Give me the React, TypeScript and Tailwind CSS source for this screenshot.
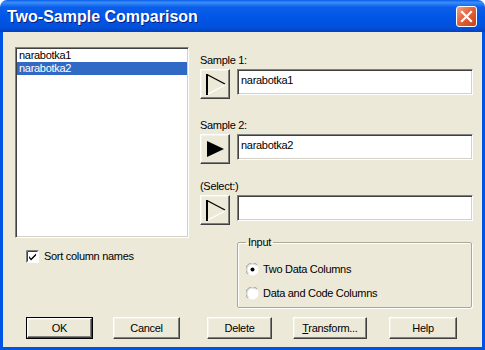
import React from 'react'

const FONT = { fontFamily: '"Liberation Sans", Arial, sans-serif' }

const sunken =
  'border border-t-[#808080] border-l-[#808080] border-b-white border-r-white shadow-[inset_1px_1px_0_#404040,inset_-1px_-1px_0_#D4D0C8]'
const raised =
  'border border-t-white border-l-white border-b-[#404040] border-r-[#404040] shadow-[inset_-1px_-1px_0_#808080,inset_1px_1px_0_#F4F2E8]'

function ArrowButton({ filled }: { filled?: boolean }) {
  return (
    <div className={`w-[30px] h-[30px] bg-[#ECE9D8] ${raised} flex items-center justify-center`}>
      {filled ? (
        <svg width="22" height="24" viewBox="0 0 22 24">
          <polygon points="3,4 20,12 3,20" fill="#000" />
        </svg>
      ) : (
        <svg width="22" height="24" viewBox="0 0 22 24">
          <line x1="3" y1="2" x2="3" y2="23" stroke="#000" strokeWidth="2" />
          <line x1="3" y1="2.5" x2="21" y2="12" stroke="#000" strokeWidth="1.4" />
          <line x1="4" y1="22" x2="21" y2="13" stroke="#fff" strokeWidth="1.4" />
        </svg>
      )}
    </div>
  )
}

function FieldRow({ label, value, filled, mt }: { label: string; value: string; filled?: boolean; mt: string }) {
  return (
    <div className={mt}>
      <div className="h-[13px] leading-[13px] text-[11px] text-black">{label}</div>
      <div className="mt-[2px] flex items-start gap-[7px]">
        <ArrowButton filled={filled} />
        <div className={`w-[236px] h-[26px] bg-white ${sunken} px-[3px] pt-[4px] text-[11px] leading-[13px] text-black`}>
          {value}
        </div>
      </div>
    </div>
  )
}

function Radio({ checked, label }: { checked?: boolean; label: string }) {
  return (
    <div className="flex items-center h-[14px]">
      <svg width="13" height="13" viewBox="0 0 13 13" className="ml-[8px]">
        <circle cx="6.5" cy="6.5" r="6" fill="#fff" />
        <path d="M1.8 11.2 A6 6 0 0 1 11.2 1.8" fill="none" stroke="#A0A0A0" strokeWidth="1" />
        <path d="M2.6 10.4 A5 5 0 0 1 10.4 2.6" fill="none" stroke="#D0D0D0" strokeWidth="1" />
        {checked && <circle cx="6.5" cy="6.5" r="2" fill="#000" />}
      </svg>
      <span className="ml-[4px] text-[11px] leading-[13px] text-black">{label}</span>
    </div>
  )
}

function Btn({ children, w, ml, def }: { children: React.ReactNode; w: string; ml: string; def?: boolean }) {
  const inner = (
    <div className={`h-full w-full bg-[#ECE9D8] ${raised} flex items-center justify-center text-[11px] text-black`}>
      {children}
    </div>
  )
  return (
    <div className={`${w} ${ml} h-[22px] ${def ? 'border border-black' : ''}`}>{inner}</div>
  )
}

export default function App() {
  return (
    <div className="w-[485px] h-[350px] bg-white tracking-[-0.3px]" style={FONT}>
      <div className="w-full h-full flex flex-col">
        {/* Title bar */}
        <div className="h-[32px] rounded-t-[7px] flex items-center justify-between pl-[7px] pr-[8px] bg-[linear-gradient(to_bottom,#0A5EE8_0%,#3A8DFA_8%,#0B5FEA_22%,#0055E6_55%,#0450DC_85%,#0042C0_100%)]">
          <span className="text-white font-bold text-[16px] tracking-normal leading-none mt-[2px] [text-shadow:1px_1px_0_#0A1A80]">
            Two-Sample Comparison
          </span>
          <div className="w-[21px] h-[21px] rounded-[3px] border border-white bg-[linear-gradient(135deg,#EFA48A_0%,#E2643C_45%,#C7401B_100%)] flex items-center justify-center mt-[1px]">
            <svg width="13" height="13" viewBox="0 0 13 13">
              <path d="M2 2 L11 11 M11 2 L2 11" stroke="#fff" strokeWidth="2.2" strokeLinecap="square" />
            </svg>
          </div>
        </div>

        {/* Client area */}
        <div className="flex-1 bg-[#ECE9D8] border-x-[3px] border-b-[3px] border-[#0054E3] flex flex-col">
          <div className="flex pt-[15px] pl-[12px]">
            {/* Left column */}
            <div className="w-[174px] flex flex-col">
              <div className={`h-[191px] bg-white ${sunken} p-[1px] text-[11px] leading-[13px]`}>
                <div className="pl-[2px] text-black">narabotka1</div>
                <div className="pl-[2px] bg-[#316AC5] text-white">narabotka2</div>
              </div>
              <div className="mt-[12px] ml-[11px] flex items-center">
                <svg width="13" height="13" viewBox="0 0 13 13">
                  <rect x="0" y="0" width="13" height="13" fill="#fff" />
                  <path d="M0.5 12.5 V0.5 H12.5" fill="none" stroke="#808080" />
                  <path d="M1.5 11.5 V1.5 H11.5" fill="none" stroke="#404040" />
                  <path d="M3 6 L5 8.5 L10 3.5 L10 5.5 L5 10.5 L3 8 Z" fill="#000" />
                </svg>
                <span className="ml-[5px] text-[11px] leading-[13px] text-black">Sort column names</span>
              </div>
            </div>

            {/* Right column */}
            <div className="ml-[11px] w-[273px] flex flex-col">
              <FieldRow mt="mt-[7px]" label="Sample 1:" value="narabotka1" />
              <FieldRow mt="mt-[20px]" label="Sample 2:" value="narabotka2" filled />
              <FieldRow mt="mt-[16px]" label="(Select:)" value="" />
              <fieldset className="mt-[11px] ml-[37px] w-[235px] h-[72px] border border-[#ACA899] rounded-[2px] shadow-[1px_1px_0_#fff,inset_1px_1px_0_#fff] px-0">
                <legend className="ml-[8px] px-[2px] text-[11px] leading-[13px] text-black">Input</legend>
                <div className="mt-[13px]">
                  <Radio checked label="Two Data Columns" />
                </div>
                <div className="mt-[10px]">
                  <Radio label="Data and Code Columns" />
                </div>
              </fieldset>
            </div>
          </div>

          {/* Buttons */}
          <div className="mt-[9px] pl-[23px] flex">
            <Btn w="w-[67px]" ml="ml-0" def>OK</Btn>
            <Btn w="w-[67px]" ml="ml-[20px]">Cancel</Btn>
            <Btn w="w-[65px]" ml="ml-[27px]">Delete</Btn>
            <Btn w="w-[74px]" ml="ml-[21px]">
              <span><span className="underline">T</span>ransform...</span>
            </Btn>
            <Btn w="w-[68px]" ml="ml-[22px]">Help</Btn>
          </div>
        </div>
      </div>
    </div>
  )
}
